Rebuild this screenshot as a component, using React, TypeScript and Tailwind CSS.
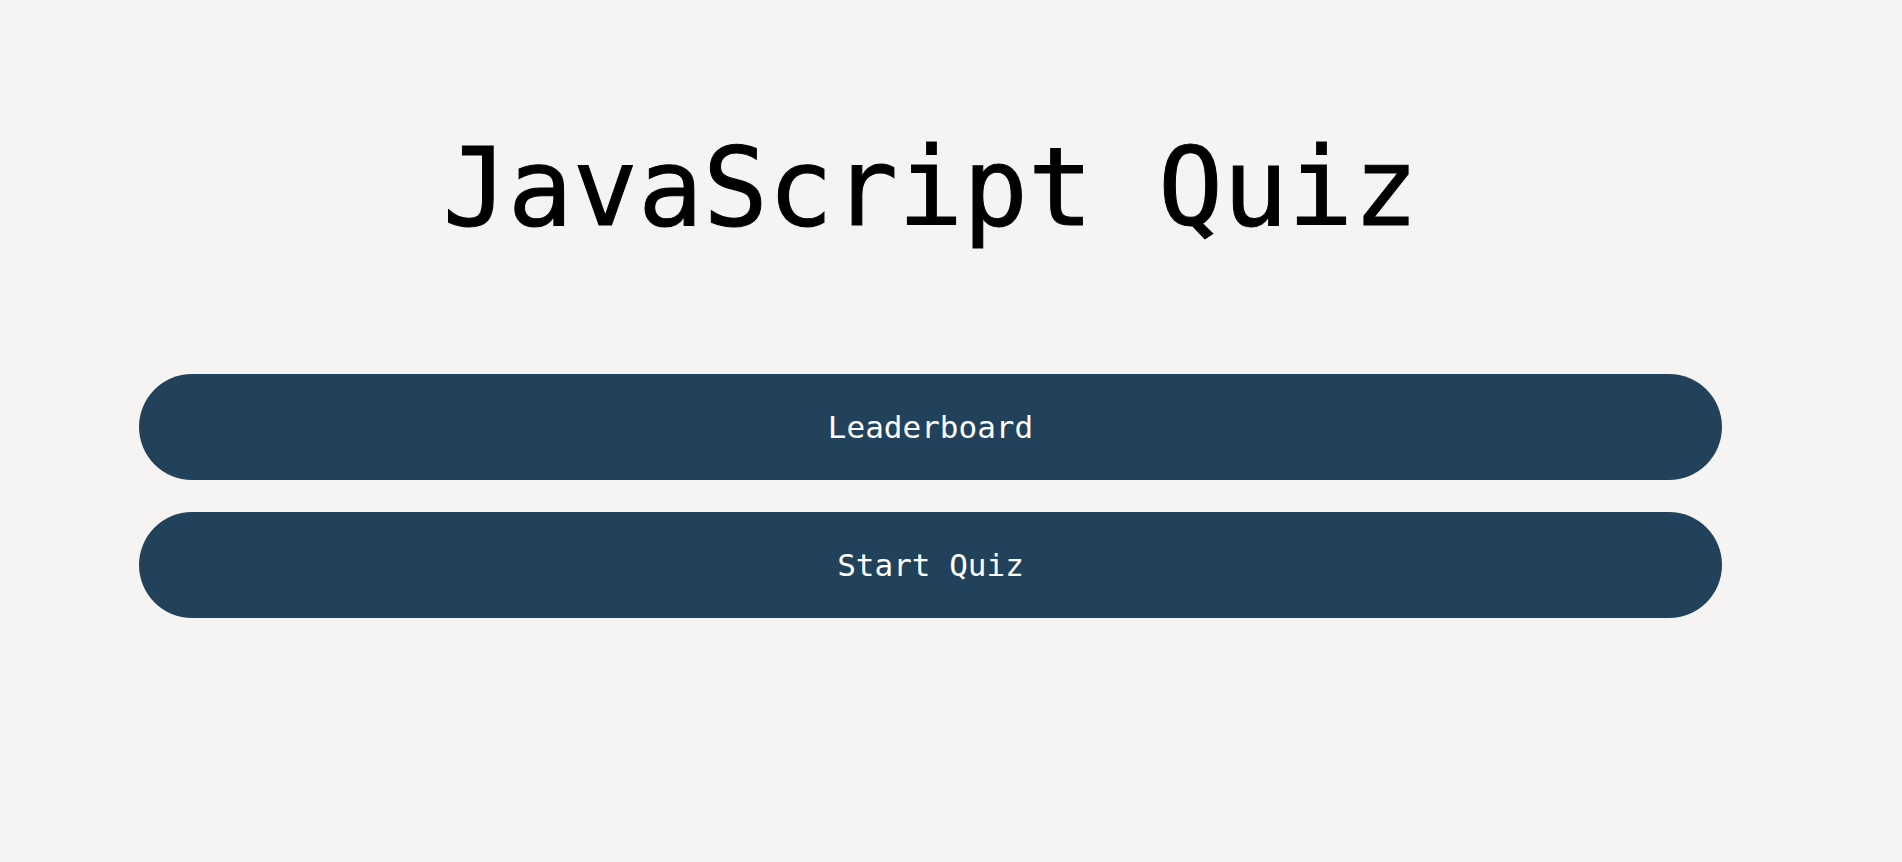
export default function App() {
  return (
    <div className="min-h-screen w-full bg-[#f5f4f2] pl-[139px] pr-[180px] pt-[128px] font-['DejaVu_Sans_Mono',monospace]">
      <h1 className="text-center text-[108px] leading-[120px] text-black [-webkit-text-stroke:1px_black]">
        JavaScript Quiz
      </h1>
      <div className="mt-[126px] flex flex-col gap-[32px]">
        <button className="h-[106px] w-full rounded-full bg-[#22415a] text-[31px] text-white">
          Leaderboard
        </button>
        <button className="h-[106px] w-full rounded-full bg-[#22415a] text-[31px] text-white">
          Start Quiz
        </button>
      </div>
    </div>
  );
}
